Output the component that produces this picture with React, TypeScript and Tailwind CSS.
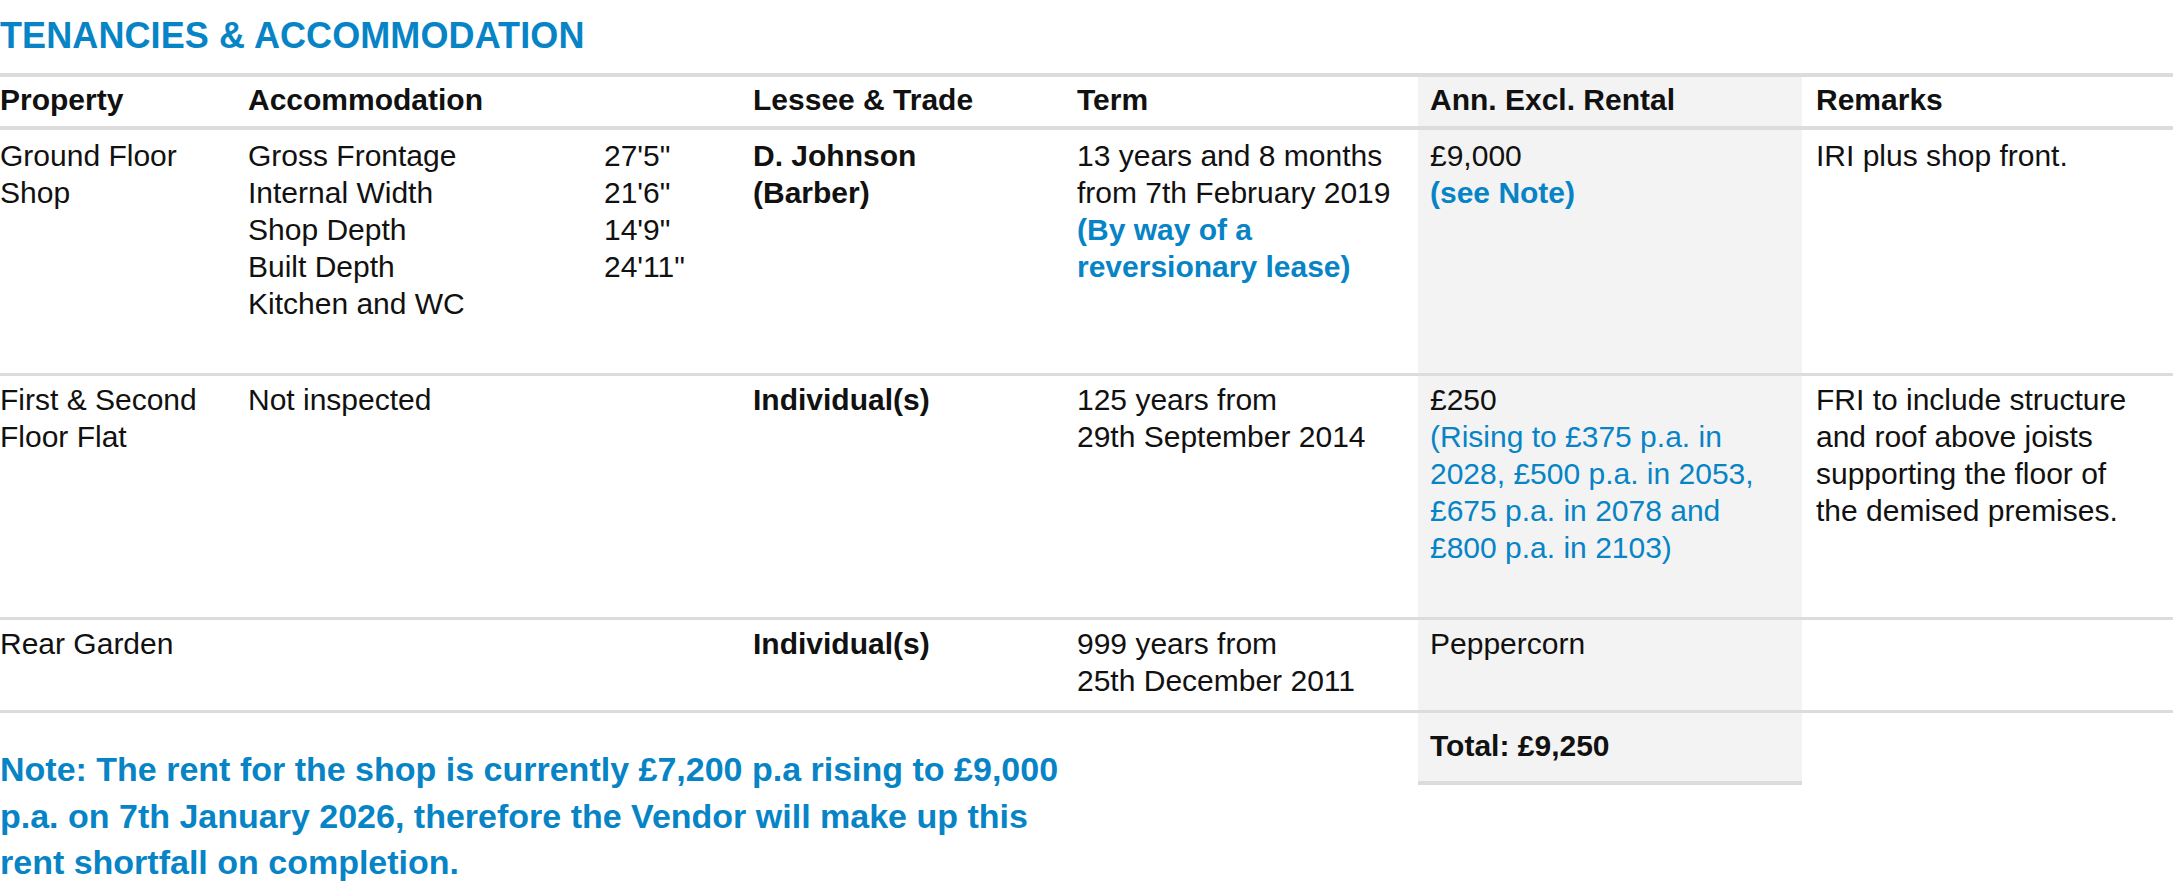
const cols = 'grid grid-cols-[248px_356px_149px_322px_343px_384px_1fr]'

function RentalCell({ children, className = '' }: { children?: React.ReactNode; className?: string }) {
  return <div className={`bg-[#f3f3f3] pl-[12px] ${className}`}>{children}</div>
}

function Blue({ children, bold }: { children: React.ReactNode; bold?: boolean }) {
  return <span className={`text-[#0784c6] ${bold ? 'font-bold' : ''}`}>{children}</span>
}

const dims: [string, string][] = [
  ['Gross Frontage', `27'5"`],
  ['Internal Width', `21'6"`],
  ['Shop Depth', `14'9"`],
  ['Built Depth', `24'11"`],
]

export default function App() {
  return (
    <div className="w-[2173px] h-[889px] bg-white text-[#111] font-['Liberation_Sans',Arial,sans-serif] overflow-hidden">
      <h1 className="pt-[18px] text-[36px] leading-[36px] font-bold text-[#0784c6] tracking-[0.1px]">
        TENANCIES &amp; ACCOMMODATION
      </h1>

      <div className="mt-[19px] text-[30px] leading-[37px] whitespace-nowrap">
        {/* Header */}
        <div className={`${cols} h-[57px] border-y-4 border-[#dcdcdc] font-bold`}>
          <div className="pt-[4px]">Property</div>
          <div className="col-span-2 pt-[4px]">Accommodation</div>
          <div className="pt-[4px]">Lessee &amp; Trade</div>
          <div className="pt-[4px] pl-[2px]">Term</div>
          <RentalCell className="pt-[4px]">Ann. Excl. Rental</RentalCell>
          <div className="pt-[4px] pl-[14px]">Remarks</div>
        </div>

        {/* Ground floor shop */}
        <div className={`${cols} h-[246px] border-b-[3px] border-[#dcdcdc]`}>
          <div className="pt-[7px]">
            Ground Floor
            <br />
            Shop
          </div>
          <div className="pt-[7px]">
            {dims.map(([k]) => (
              <div key={k}>{k}</div>
            ))}
            <div>Kitchen and WC</div>
          </div>
          <div className="pt-[7px]">
            {dims.map(([k, v]) => (
              <div key={k}>{v}</div>
            ))}
          </div>
          <div className="pt-[7px] font-bold">
            D. Johnson
            <br />
            (Barber)
          </div>
          <div className="pt-[7px] pl-[2px]">
            13 years and 8 months
            <br />
            from 7th February 2019
            <br />
            <Blue bold>
              (By way of a
              <br />
              reversionary lease)
            </Blue>
          </div>
          <RentalCell className="pt-[7px]">
            £9,000
            <br />
            <Blue bold>(see Note)</Blue>
          </RentalCell>
          <div className="pt-[7px] pl-[14px]">IRI plus shop front.</div>
        </div>

        {/* First & second floor flat */}
        <div className={`${cols} h-[244px] border-b-[3px] border-[#dcdcdc]`}>
          <div className="pt-[5px]">
            First &amp; Second
            <br />
            Floor Flat
          </div>
          <div className="pt-[5px] col-span-2">Not inspected</div>
          <div className="pt-[5px] font-bold">Individual(s)</div>
          <div className="pt-[5px] pl-[2px]">
            125 years from
            <br />
            29th September 2014
          </div>
          <RentalCell className="pt-[5px]">
            £250
            <br />
            <Blue>
              (Rising to £375 p.a. in
              <br />
              2028, £500 p.a. in 2053,
              <br />
              £675 p.a. in 2078 and
              <br />
              £800 p.a. in 2103)
            </Blue>
          </RentalCell>
          <div className="pt-[5px] pl-[14px]">
            FRI to include structure
            <br />
            and roof above joists
            <br />
            supporting the floor of
            <br />
            the demised premises.
          </div>
        </div>

        {/* Rear garden */}
        <div className={`${cols} h-[93px] border-b-[3px] border-[#dcdcdc]`}>
          <div className="pt-[5px]">Rear Garden</div>
          <div className="col-span-2" />
          <div className="pt-[5px] font-bold">Individual(s)</div>
          <div className="pt-[5px] pl-[2px]">
            999 years from
            <br />
            25th December 2011
          </div>
          <RentalCell className="pt-[5px]">Peppercorn</RentalCell>
          <div />
        </div>

        {/* Total + note */}
        <div className={cols}>
          <div className="col-span-5 pt-[33px] text-[34px] leading-[46.5px] font-bold text-[#0784c6]">
            Note: The rent for the shop is currently £7,200 p.a rising to £9,000
            <br />
            p.a. on 7th January 2026, therefore the Vendor will make up this
            <br />
            rent shortfall on completion.
          </div>
          <RentalCell className="self-start pt-[14px] pb-[17px] font-bold border-b-4 border-[#dcdcdc]">
            Total: £9,250
          </RentalCell>
          <div />
        </div>
      </div>
    </div>
  )
}
